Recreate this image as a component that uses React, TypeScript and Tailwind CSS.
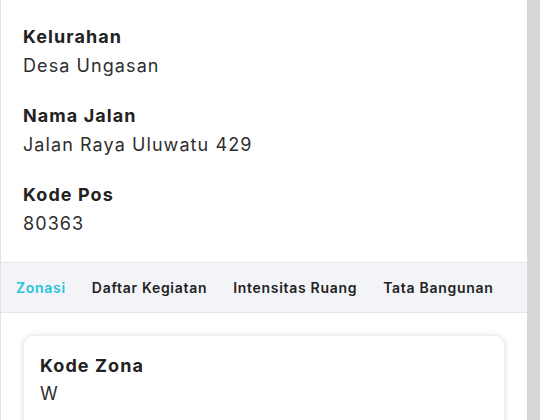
const fields = [
  { label: "Kelurahan", value: "Desa Ungasan" },
  { label: "Nama Jalan", value: "Jalan Raya Uluwatu 429" },
  { label: "Kode Pos", value: "80363" },
];

const tabs = ["Zonasi", "Daftar Kegiatan", "Intensitas Ruang", "Tata Bangunan"];

export default function App() {
  return (
    <div
      className="flex h-[420px] w-[540px] overflow-hidden bg-[#d7d7d7]"
      style={{ fontFamily: "Inter, 'Noto Sans', sans-serif" }}
    >
      <div className="flex w-[527px] shrink-0 flex-col border-l border-[#e3e3e3] bg-white">
        <div className="flex shrink-0 flex-col gap-[22px] pl-[22px] pt-[23px] pb-[24px]">
          {fields.map((f) => (
            <div key={f.label} className="flex flex-col">
              <div className="text-[18px] leading-[28px] font-bold tracking-[0.06em] text-[#222222]">
                {f.label}
              </div>
              <div className="mt-[1px] text-[18px] leading-[28px] tracking-[0.06em] text-[#2e2e2e]">
                {f.value}
              </div>
            </div>
          ))}
        </div>
        <div className="flex h-[51px] shrink-0 items-center gap-[26px] border-y border-[#e6e7ea] bg-[#f3f4f7] pl-[15px]">
          {tabs.map((t, i) => (
            <span
              key={t}
              className={
                "text-[14px] font-semibold tracking-[0.05em] " +
                (i === 0 ? "text-[#25c3dc]" : "text-[#222222]")
              }
            >
              {t}
            </span>
          ))}
        </div>
        <div className="shrink-0 px-[22px] pt-[22px]">
          <div className="h-[120px] rounded-[10px] border border-[#eeeeee] bg-white pl-[16px] pt-[16px] shadow-[0_1px_6px_rgba(0,0,0,0.12)]">
            <div className="text-[18px] leading-[28px] font-bold tracking-[0.06em] text-[#222222]">
              Kode Zona
            </div>
            <div className="text-[18px] leading-[28px] tracking-[0.06em] text-[#2e2e2e]">W</div>
          </div>
        </div>
      </div>
    </div>
  );
}
